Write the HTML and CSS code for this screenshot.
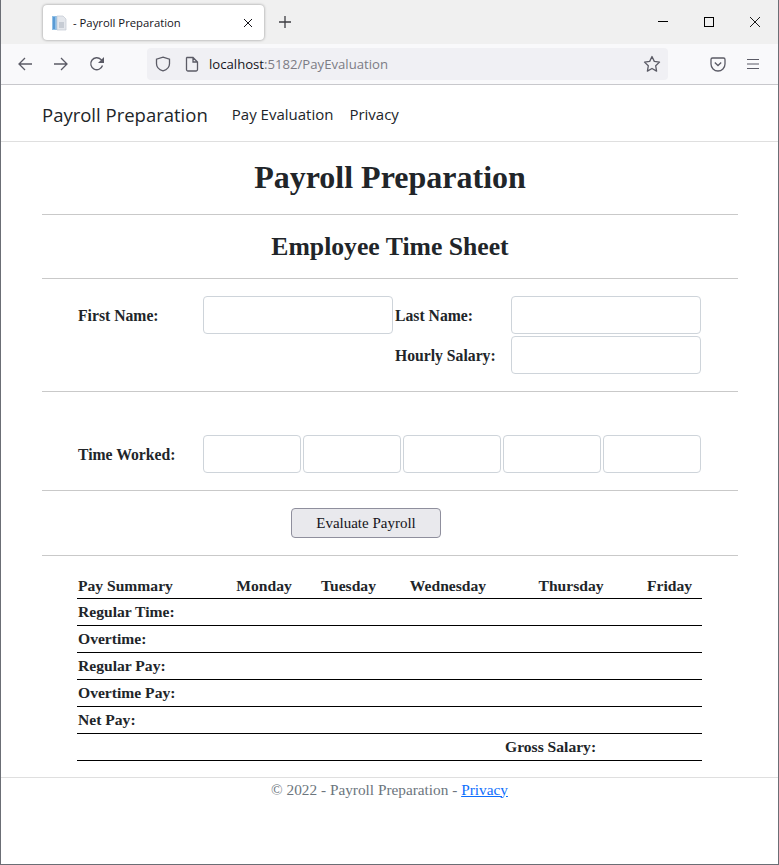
FILE: index.html
```html
<!DOCTYPE html>
<html lang="en">
<head>
    <meta charset="UTF-8">
    <meta name="viewport" content="width=device-width, initial-scale=1.0">
    <title>Payroll Preparation</title>
    <link rel="stylesheet" href="styles.css">
</head>
<body>
    <div class="window">
        <div class="tabstrip">
            <div class="tab">
                <svg class="favicon" width="16" height="16" viewBox="0 0 16 16">
                    <rect x="0" y="1" width="5" height="14" fill="#8fbfe6"/>
                    <rect x="1" y="2" width="2" height="12" fill="#5a9bd5"/>
                    <path d="M5 1h6l3 3v11H5z" fill="#e4e7ec" stroke="#c3c9d2" stroke-width="0.7"/>
                    <path d="M7 8h5M7 10h5M7 12h5" stroke="#a9b1bc" stroke-width="1"/>
                </svg>
                <span class="tab-title">- Payroll Preparation</span>
                <svg class="tab-close" width="10" height="10" viewBox="0 0 10 10">
                    <path d="M1 1l8 8M9 1l-8 8" stroke="#15141a" stroke-width="1" fill="none"/>
                </svg>
            </div>
            <svg class="newtab" width="14" height="14" viewBox="0 0 14 14">
                <path d="M7 1v12M1 7h12" stroke="#3d3d42" stroke-width="1.3" fill="none"/>
            </svg>
            <div class="winbtns">
                <svg width="12" height="12" viewBox="0 0 12 12"><path d="M1 5.5h10" stroke="#000" stroke-width="1" fill="none"/></svg>
                <svg width="12" height="12" viewBox="0 0 12 12"><rect x="1.5" y="1.5" width="9" height="9" stroke="#000" stroke-width="1" fill="none"/></svg>
                <svg width="12" height="12" viewBox="0 0 12 12"><path d="M1 1l10 10M11 1L1 11" stroke="#000" stroke-width="0.9" fill="none"/></svg>
            </div>
        </div>
        <div class="toolbar">
            <svg class="tool" width="16" height="16" viewBox="0 0 16 16"><path d="M15 8H2M8 2L2 8l6 6" stroke="#5b5b66" stroke-width="1.3" fill="none"/></svg>
            <svg class="tool" width="16" height="16" viewBox="0 0 16 16"><path d="M1 8h13M8 2l6 6-6 6" stroke="#5b5b66" stroke-width="1.3" fill="none"/></svg>
            <svg class="tool" width="16" height="16" viewBox="0 0 16 16"><path d="M13.5 9.5A6 6 0 1 1 12 3.5L14.5 5.5" stroke="#5b5b66" stroke-width="1.3" fill="none"/><path d="M15 1v6H9z" fill="#5b5b66"/></svg>
            <div class="urlbar">
                <svg width="16" height="16" viewBox="0 0 16 16"><path d="M8 1.2l6.5 2v4.5c0 3.5-2.8 6-6.5 7.2C4.300 13.700 1.500 11.200 1.500 7.700V3.200z" stroke="#5b5b66" stroke-width="1.3" fill="none"/></svg>
                <svg class="docicon" width="14" height="16" viewBox="0 0 14 16"><path d="M2 1.500h6l4.500 4.500v7.500a1.500 1.500 0 0 1-1.500 1.500H3a1.500 1.500 0 0 1-1.500-1.500V2zM8 1.500V6h4.500" stroke="#5b5b66" stroke-width="1.3" fill="none"/></svg>
                <span class="url"><span class="url-host">localhost</span>:5182/PayEvaluation</span>
                <svg class="star" width="18" height="18" viewBox="0 0 18 18"><path d="M9 1.500l2.300 4.900 5.200.7-3.800 3.700.9 5.300L9 13.500l-4.600 2.600.9-5.300L1.500 7.100l5.200-.7z" stroke="#5b5b66" stroke-width="1.300" stroke-linejoin="round" fill="none"/></svg>
            </div>
            <svg class="pocket" width="16" height="16" viewBox="0 0 16 16"><path d="M2.500 2h11A1.500 1.500 0 0 1 15 3.500V8a7 7 0 0 1-14 0V3.500A1.500 1.500 0 0 1 2.500 2z" stroke="#5b5b66" stroke-width="1.300" fill="none"/><path d="M4.800 6.500L8 9.500l3.200-3" stroke="#5b5b66" stroke-width="1.300" fill="none"/></svg>
            <svg class="menu" width="14" height="14" viewBox="0 0 14 14"><path d="M1 2.500h12M1 7h12M1 11.500h12" stroke="#5b5b66" stroke-width="1.200" fill="none"/></svg>
        </div>

        <nav class="navbar">
            <a class="brand" href="#">Payroll Preparation</a>
            <a class="navlink" href="#">Pay Evaluation</a>
            <a class="navlink" href="#">Privacy</a>
        </nav>

        <main class="container">
            <h1>Payroll Preparation</h1>
            <hr>
            <h2>Employee Time Sheet</h2>
            <hr class="after-h2">

            <div class="name-grid">
                <label>First Name:</label>
                <input type="text">
                <label>Last Name:</label>
                <input type="text">
                <label class="salary-label">Hourly Salary:</label>
                <input type="text" class="salary-input">
            </div>
            <hr class="after-names">

            <div class="time-row">
                <label>Time Worked:</label>
                <input type="text">
                <input type="text">
                <input type="text">
                <input type="text">
                <input type="text">
            </div>
            <hr class="after-time">

            <div class="button-row">
                <button>Evaluate Payroll</button>
            </div>
            <hr class="after-button">

            <table class="summary">
                <colgroup>
                    <col class="c1"><col class="c2"><col class="c3"><col class="c4"><col class="c5"><col class="c6">
                </colgroup>
                <thead>
                    <tr><th class="first">Pay Summary</th><th>Monday</th><th>Tuesday</th><th>Wednesday</th><th>Thursday</th><th>Friday</th></tr>
                </thead>
                <tbody>
                    <tr><th class="first">Regular Time:</th><td></td><td></td><td></td><td></td><td></td></tr>
                    <tr><th class="first">Overtime:</th><td></td><td></td><td></td><td></td><td></td></tr>
                    <tr><th class="first">Regular Pay:</th><td></td><td></td><td></td><td></td><td></td></tr>
                    <tr><th class="first">Overtime Pay:</th><td></td><td></td><td></td><td></td><td></td></tr>
                    <tr><th class="first">Net Pay:</th><td></td><td></td><td></td><td></td><td></td></tr>
                    <tr><td></td><td></td><td></td><td></td><th class="gross">Gross Salary:</th><td></td></tr>
                </tbody>
            </table>
        </main>

        <footer class="footer">
            © 2022 - Payroll Preparation - <a href="#">Privacy</a>
        </footer>
    </div>
</body>
</html>
```

FILE: styles.css
```css
* {
    box-sizing: border-box;
}

html, body {
    margin: 0;
    height: 100%;
}

body {
    font-family: "Liberation Serif", serif;
    font-size: 16px;
    color: #212529;
    background-color: #fff;
}

.window {
    height: 865px;
    border: 1px solid #6b6e75;
    border-top: 0;
    overflow: hidden;
}

/* browser chrome */
.tabstrip {
    display: flex;
    align-items: center;
    height: 44px;
    background-color: #f0f0f0;
    padding-left: 42px;
}

.tab {
    display: flex;
    align-items: center;
    width: 221px;
    height: 35px;
    margin-top: 1px;
    padding: 0 11px 0 9px;
    background-color: #fff;
    border-radius: 4px;
    box-shadow: 0 0 3px rgba(0, 0, 0, 0.4);
}

.tab-title {
    margin-left: 5px;
    flex: 1;
    font-family: "Open Sans", sans-serif;
    font-size: 11.3px;
    color: #15141a;
}

.newtab {
    margin-left: 14px;
}

.winbtns {
    display: flex;
    gap: 34px;
    margin-left: auto;
    padding-right: 17px;
}

.toolbar {
    display: flex;
    align-items: center;
    height: 41px;
    background-color: #f9f9fb;
    border-bottom: 1px solid #c8c8cc;
    padding-left: 16px;
}

.tool {
    margin-right: 20px;
}

.tool:nth-child(3) {
    margin-right: 42px;
}

.urlbar {
    display: flex;
    align-items: center;
    width: 521px;
    height: 32px;
    padding: 0 7px 0 8px;
    background-color: #f0f0f4;
    border-radius: 4px;
}

.docicon {
    margin-left: 14px;
}

.url {
    margin-left: 10px;
    flex: 1;
    font-family: "Open Sans", sans-serif;
    font-size: 13.15px;
    color: #7c7c84;
}

.url-host {
    color: #15141a;
}

.pocket {
    margin-left: 42px;
}

.menu {
    margin-left: 20px;
}

/* site nav */
.navbar {
    display: flex;
    align-items: center;
    height: 57px;
    padding: 1px 0 0 41px;
    border-bottom: 1px solid #dfdfdf;
    font-family: "Open Sans", sans-serif;
}

.navbar a {
    color: #212529;
    text-decoration: none;
}

.brand {
    padding-top: 1px;
    font-size: 18.5px;
    margin-right: 24px;
}

.navlink {
    font-size: 15px;
    margin-right: 16px;
}

/* page */
.container {
    padding: 0 40px 0 41px;
}

h1 {
    margin: 0;
    height: 72px;
    font-size: 32px;
    line-height: 70px;
    text-align: center;
}

h2 {
    margin: 0;
    height: 63px;
    font-size: 25.7px;
    line-height: 63px;
    text-align: center;
}

hr {
    margin: 0;
    height: 1px;
    border: 0;
    background-color: #c9c9c9;
}

label {
    padding-top: 1px;
    font-size: 15.7px;
    font-weight: bold;
}

input {
    height: 38px;
    background-color: #fff;
    border: 1px solid #ced4da;
    border-radius: 4px;
}

.name-grid {
    display: grid;
    grid-template-columns: 125px 190px 2px 116px 190px;
    grid-auto-rows: 38px;
    row-gap: 2px;
    align-items: center;
    padding: 17px 0 17px 36px;
}

.name-grid label:nth-of-type(2) {
    grid-column: 4;
}

.salary-label {
    grid-column: 4;
    grid-row: 2;
}

.salary-input {
    grid-column: 5;
    grid-row: 2;
}

.time-row {
    display: grid;
    grid-template-columns: 123px repeat(5, 98px);
    column-gap: 2px;
    align-items: center;
    padding: 43px 0 17px 36px;
}

.button-row {
    display: flex;
    padding: 17px 0 17px 249px;
}

button {
    width: 150px;
    height: 30px;
    padding: 0;
    font-family: "Liberation Serif", serif;
    font-size: 15px;
    color: #15141a;
    background-color: #e9e9ed;
    border: 1px solid #8f8f9d;
    border-radius: 4px;
}

.summary {
    table-layout: fixed;
    width: 625px;
    margin: 15px 0 0 35px;
    border-collapse: collapse;
    font-size: 15.6px;
}

.c1 { width: 145px; }
.c2 { width: 84px; }
.c3 { width: 85px; }
.c4 { width: 114px; }
.c5 { width: 132px; }
.c6 { width: 65px; }

.summary tr {
    height: 27px;
    border-bottom: 1px solid #000;
}

.summary th {
    padding: 1px 0 0;
    text-align: center;
    font-weight: bold;
}

.summary thead th {
    padding-top: 3px;
}

.summary th.first {
    padding-left: 1px;
    text-align: left;
}

.summary th.gross {
    padding-right: 42px;
    text-align: right;
    white-space: nowrap;
}

.footer {
    margin-top: 16px;
    padding-top: 3px;
    border-top: 1px solid #dfdfdf;
    color: #6c757d;
    font-size: 15.3px;
    text-align: center;
}

.footer a {
    color: #0d6efd;
}
```
